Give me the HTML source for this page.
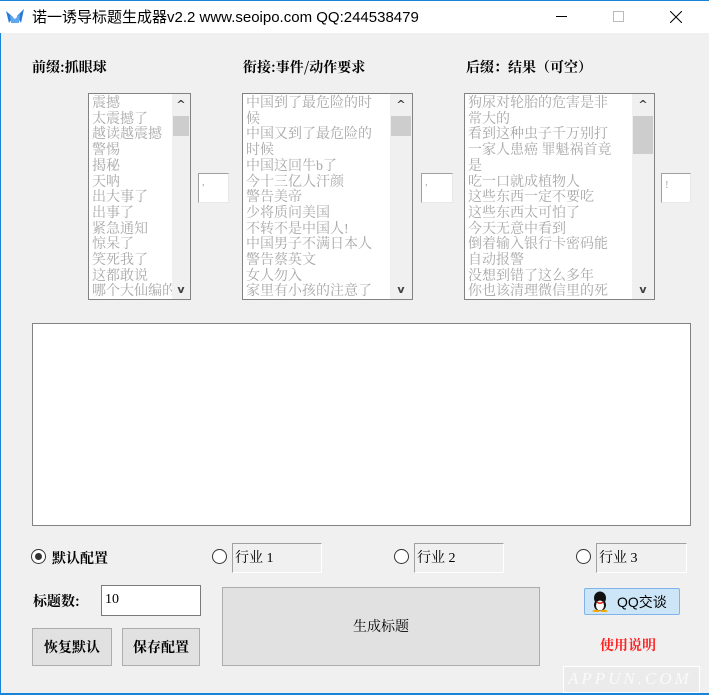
<!DOCTYPE html>
<html><head><meta charset="utf-8"><style>
*{margin:0;padding:0;box-sizing:border-box}
body{width:709px;height:695px;background:#f0f0f0;position:relative;overflow:hidden;font-family:"Liberation Serif","Noto Serif CJK SC",serif;font-size:14px;color:#000}
.a{position:absolute}
.title{left:0;top:0;width:709px;height:33px;background:#fff;border-top:1px solid #1883d7}
.tt{left:32px;top:6px;font-family:"Liberation Sans","Noto Sans CJK SC",sans-serif;font-size:15px;white-space:nowrap}
.lb{background:#fff;border:1px solid #828282;overflow:hidden}
.lb .txt{position:absolute;left:3px;top:2px;color:#a8a8a8;font-size:14px;line-height:15.7px;white-space:pre}
.sb{position:absolute;right:0;top:0;width:18px;bottom:0;background:#f0f0f0}
.sb .th{position:absolute;left:1px;right:1px;top:22px;height:20px;background:#cdcdcd}
.sb .up,.sb .dn{position:absolute;left:0;width:18px;text-align:center;font-size:11px;font-weight:bold;color:#404040;font-family:"DejaVu Sans",sans-serif}
.in{background:#fff;border:1px solid #a0a0a0;border-right-color:#e8e8e8;border-bottom-color:#e8e8e8}
.bold{font-weight:bold;font-family:"Noto Serif CJK SC",serif}
.btn{background:#e1e1e1;border:1px solid #adadad;text-align:center}
.rad{width:15px;height:15px;border:1px solid #333;border-radius:50%;background:#fff}
.ind{background:#f0f0f0;border:1px solid #a0a0a0;border-right-color:#fff;border-bottom-color:#fff;padding:3px 0 0 2px}
</style></head><body>
<div class="a title"></div>
<svg class="a" style="left:6px;top:9px" width="18" height="15" viewBox="0 0 18 15"><path d="M0 2 L7 8 L3 14 Z" fill="#2a7bd8"/><path d="M18 0 L11 7 L15 14 Z" fill="#2a7bd8"/><path d="M4 6 L9 10 L14 5 L13 14 L5 14 Z" fill="#5fa9ef"/></svg>
<div class="a tt">诺一诱导标题生成器v2.2 www.seoipo.com QQ:244538479</div>
<div class="a" style="left:556px;top:16px;width:11px;height:1px;background:#000"></div>
<div class="a" style="left:613px;top:11px;width:11px;height:11px;border:1px solid #bbb"></div>
<svg class="a" style="left:670px;top:11px" width="12" height="12"><path d="M0 0L12 12M12 0L0 12" stroke="#000" stroke-width="1"/></svg>
<div class="a" style="left:0;top:33px;width:1px;height:662px;background:#1883d7"></div>
<div class="a" style="left:0;top:693px;width:709px;height:2px;background:#1883d7"></div>

<div class="a bold" style="left:32px;top:57px;font-size:14px">前缀:抓眼球</div>
<div class="a bold" style="left:243px;top:57px;font-size:14px">衔接:事件/动作要求</div>
<div class="a bold" style="left:466px;top:57px;font-size:14px">后缀：结果（可空）</div>

<div class="a lb" style="left:88px;top:93px;width:103px;height:207px"><div class="txt">震撼
太震撼了
越读越震撼
警惕
揭秘
天呐
出大事了
出事了
紧急通知
惊呆了
笑死我了
这都敢说
哪个大仙编的</div><div class="sb"><div class="up" style="top:4px">^</div><div class="th"></div><div class="dn" style="bottom:3px">v</div></div></div>
<div class="a lb" style="left:242px;top:93px;width:171px;height:207px"><div class="txt">中国到了最危险的时
候
中国又到了最危险的
时候
中国这回牛b了
今十三亿人汗颜
警告美帝
少将质问美国
不转不是中国人!
中国男子不满日本人
警告蔡英文
女人勿入
家里有小孩的注意了</div><div class="sb" style="width:22px"><div class="up" style="top:4px;width:22px">^</div><div class="th"></div><div class="dn" style="bottom:3px;width:22px">v</div></div></div>
<div class="a lb" style="left:464px;top:93px;width:191px;height:207px"><div class="txt">狗尿对轮胎的危害是非
常大的
看到这种虫子千万别打
一家人患癌 罪魁祸首竟
是
吃一口就成植物人
这些东西一定不要吃
这些东西太可怕了
今天无意中看到
倒着输入银行卡密码能
自动报警
没想到错了这么多年
你也该清理微信里的死</div><div class="sb" style="width:22px"><div class="up" style="top:4px;width:22px">^</div><div class="th" style="height:38px"></div><div class="dn" style="bottom:3px;width:22px">v</div></div></div>

<div class="a in" style="left:198px;top:173px;width:31px;height:30px;color:#aaa;font-size:11px;padding:2px 3px">,</div>
<div class="a in" style="left:421px;top:173px;width:32px;height:30px;color:#aaa;font-size:11px;padding:2px 3px">,</div>
<div class="a in" style="left:661px;top:173px;width:30px;height:30px;color:#aaa;font-size:11px;padding:5px 3px">!</div>

<div class="a" style="left:32px;top:323px;width:659px;height:203px;background:#fff;border:1px solid #828282"></div>

<div class="a rad" style="left:31px;top:549px"><div style="margin:3px;width:7px;height:7px;border-radius:50%;background:#333"></div></div>
<div class="a bold" style="left:52px;top:548px">默认配置</div>
<div class="a rad" style="left:212px;top:549px"></div>
<div class="a ind" style="left:232px;top:543px;width:90px;height:30px">行业 1</div>
<div class="a rad" style="left:394px;top:549px"></div>
<div class="a ind" style="left:414px;top:543px;width:90px;height:30px">行业 2</div>
<div class="a rad" style="left:576px;top:549px"></div>
<div class="a ind" style="left:596px;top:543px;width:91px;height:30px">行业 3</div>

<div class="a bold" style="left:33px;top:591px">标题数:</div>
<div class="a" style="left:101px;top:585px;width:100px;height:31px;background:#fff;border:1px solid #7a7a7a;padding:6px 3px">10</div>
<div class="a btn bold" style="left:32px;top:628px;width:80px;height:38px;line-height:36px">恢复默认</div>
<div class="a btn bold" style="left:122px;top:628px;width:78px;height:38px;line-height:36px">保存配置</div>
<div class="a btn" style="left:222px;top:587px;width:318px;height:79px;line-height:76px;font-family:'Noto Serif CJK SC',serif">生成标题</div>

<div class="a" style="left:584px;top:588px;width:96px;height:27px;background:#cde6f7;border:1px solid #7eb4ea;border-radius:2px;font-family:'Liberation Sans','Noto Sans CJK SC',sans-serif;font-size:14px;padding:3px 0 0 32px">QQ交谈</div>
<svg class="a" style="left:590px;top:591px" width="20" height="21" viewBox="0 0 20 21"><ellipse cx="10" cy="7" rx="6" ry="6.5" fill="#111"/><ellipse cx="10" cy="14" rx="6" ry="6" fill="#111"/><ellipse cx="10" cy="14.5" rx="4" ry="5" fill="#fff"/><path d="M6 10 Q10 13 14 10 L13 12 Q10 14 7 12Z" fill="#e0201a"/><ellipse cx="6" cy="20" rx="3.5" ry="1.2" fill="#f5a800"/><ellipse cx="14" cy="20" rx="3.5" ry="1.2" fill="#f5a800"/></svg>
<div class="a bold" style="left:600px;top:635px;color:#ff2020">使用说明</div>
<div class="a" style="left:563px;top:666px;width:137px;height:27px;border:1px solid #fff;background:#ebebeb;color:#fafafa;font-family:'Liberation Serif',serif;font-style:italic;font-size:17px;letter-spacing:3px;padding:2px 0 0 4px">APPUN.COM</div>
</body></html>
